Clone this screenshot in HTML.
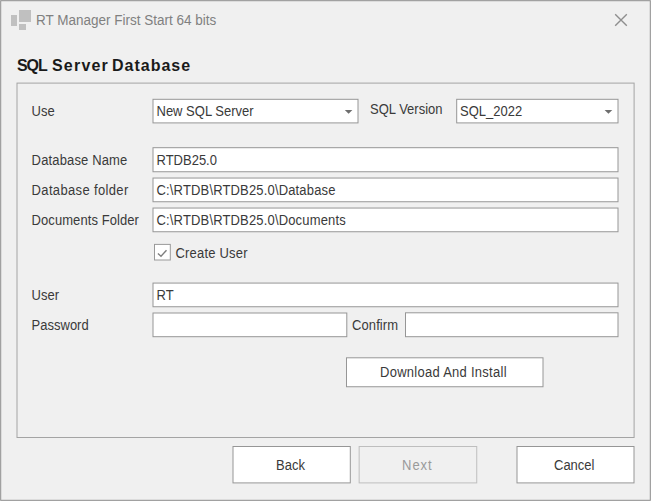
<!DOCTYPE html>
<html><head><meta charset="utf-8">
<style>
html,body{margin:0;padding:0}
body{width:651px;height:501px;overflow:hidden;background:#f0f0f0;position:relative;font-family:"Liberation Sans",sans-serif;font-size:13px;color:#3a3a3a}
svg.bg{position:absolute;left:0;top:0}
.t{position:absolute;line-height:15px;white-space:nowrap;transform:scaleY(1.08);transform-origin:0 12px}
.hd{position:absolute;top:57px;font-size:16px;font-weight:bold;line-height:17px;color:#1a1a1a;white-space:nowrap}
</style></head>
<body>
<svg class="bg" width="651" height="501" viewBox="0 0 651 501">
 <!-- window border -->
 <rect x="0.7" y="0.7" width="649.6" height="499.6" fill="none" stroke="#8e8e8e" stroke-width="1"/>
 <!-- title icon -->
 <rect x="19" y="10" width="12" height="12" fill="#c0c0c0"/>
 <rect x="11" y="15" width="6" height="11" fill="#c0c0c0"/>
 <rect x="19" y="24" width="7" height="6" fill="#c0c0c0"/>
 <!-- close -->
 <path d="M615.2 14.3L626.8 25.7M626.8 14.3L615.2 25.7" stroke="#8e8e8e" stroke-width="1.4" fill="none"/>
 <!-- group box -->
 <rect x="17" y="83.1" width="617.1" height="354.4" fill="none" stroke="#a4a4a4" stroke-width="1"/>
 <g fill="#fff" stroke="#969696" stroke-width="1">
  <rect x="153" y="99.3" width="205" height="23.6"/>
  <rect x="456.7" y="99.3" width="161.3" height="23.6"/>
  <rect x="153" y="147.7" width="465" height="24.05"/>
  <rect x="153" y="178.04" width="465" height="23.71"/>
  <rect x="153" y="208.04" width="465" height="23.71"/>
  <rect x="153" y="283.08" width="465" height="23.67"/>
  <rect x="153" y="313" width="193.8" height="23.7"/>
  <rect x="405.5" y="312.8" width="212.5" height="23.9"/>
  <rect x="346.5" y="357.8" width="196.5" height="28.95"/>
  <rect x="233" y="446.5" width="117.3" height="36.4"/>
  <rect x="517" y="446.5" width="117" height="36.4"/>
 </g>
 <rect x="359.15" y="446.5" width="117.6" height="36.4" fill="#f0f0f0" stroke="#bebebe" stroke-width="1"/>
 <!-- combo arrows -->
 <path d="M344.8 110H352.4L348.6 113.8Z" fill="#6e6e6e"/>
 <path d="M604.6 110H612.3L608.45 113.8Z" fill="#6e6e6e"/>
 <!-- checkbox -->
 <rect x="154.5" y="244.4" width="15.8" height="15.6" fill="#fff" stroke="#999" stroke-width="1"/>
 <path d="M157.9 253.4L161 256.2L166.5 250.2" stroke="#7e7e7e" stroke-width="1.4" fill="none"/>
</svg>

<div class="t" style="left:36px;top:13px;font-size:13.5px;color:#808080">RT Manager First Start 64 bits</div>

<div class="hd" style="left:17px;letter-spacing:-1.1px">SQL</div><div class="hd" style="left:52px;letter-spacing:1.2px">Server</div><div class="hd" style="left:112px;letter-spacing:1px">Database</div>

<div class="t" style="left:31.6px;top:104px">Use</div>
<div class="t" style="left:156.5px;top:104px">New SQL Server</div>

<div class="t" style="left:370px;top:102px">SQL Version</div>
<div class="t" style="left:460px;top:104px">SQL_2022</div>

<div class="t" style="left:31.6px;top:153px;letter-spacing:0.15px">Database Name</div>
<div class="t" style="left:156.5px;top:153px">RTDB25.0</div>

<div class="t" style="left:31.6px;top:183px;letter-spacing:0.35px">Database folder</div>
<div class="t" style="left:156.5px;top:183px;letter-spacing:0.16px">C:\RTDB\RTDB25.0\Database</div>

<div class="t" style="left:31.6px;top:213px;letter-spacing:0.07px">Documents Folder</div>
<div class="t" style="left:156.5px;top:213px;letter-spacing:0.16px">C:\RTDB\RTDB25.0\Documents</div>

<div class="t" style="left:175.5px;top:246px;letter-spacing:0.2px">Create User</div>

<div class="t" style="left:31.6px;top:288px">User</div>
<div class="t" style="left:156.5px;top:288px">RT</div>

<div class="t" style="left:31.6px;top:318px">Password</div>
<div class="t" style="left:352px;top:318px;letter-spacing:0.1px">Confirm</div>

<div class="t" style="left:380px;top:365px;letter-spacing:0.27px">Download And Install</div>

<div class="t" style="left:276px;top:458px">Back</div>
<div class="t" style="left:402px;top:458px;color:#9a9a9a;letter-spacing:1px">Next</div>
<div class="t" style="left:554px;top:458px">Cancel</div>
</body></html>
